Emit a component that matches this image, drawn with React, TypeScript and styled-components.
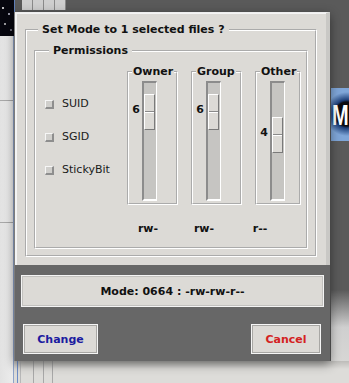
import React from 'react'
import styled, { createGlobalStyle } from 'styled-components'

const GlobalStyle = createGlobalStyle`
  html, body {
    margin: 0;
    padding: 0;
    background: #5a5a5a;
  }
  body {
    font-family: 'DejaVu Sans', 'Liberation Sans', sans-serif;
  }
`

const Desktop = styled.div`
  position: relative;
  width: 349px;
  height: 383px;
  overflow: hidden;
  background: #5a5a5a;
  padding: 12px 0 0 14px;
  box-sizing: border-box;
`

/* other windows lying on the desktop behind the dialog */
const StarField = styled.div`
  position: absolute;
  left: 0;
  top: 0;
  width: 14px;
  height: 36px;
  background:
    radial-gradient(circle at 3px 8px, #fff 0.6px, transparent 1px),
    radial-gradient(circle at 9px 14px, #ccd 0.6px, transparent 1px),
    radial-gradient(circle at 5px 24px, #fff 0.5px, transparent 1px),
    radial-gradient(circle at 11px 30px, #aab 0.5px, transparent 1px),
    #07070f;
  border-right: 1px solid #5f7fb8;
`

const LeftPane = styled.div`
  position: absolute;
  left: 0;
  top: 36px;
  width: 14px;
  height: 347px;
  background: linear-gradient(to right, #e2e2e2, #ececec);
  border-right: 1px solid #8fa3c8;
  box-sizing: border-box;

  &::before,
  &::after {
    content: '';
    position: absolute;
    left: 0;
    right: 0;
    height: 1px;
    background: #a8a8a8;
  }
  &::before {
    top: 64px;
  }
  &::after {
    top: 186px;
  }
`

const TitleStrip = styled.div`
  position: absolute;
  left: 22px;
  top: 0;
  width: 44px;
  height: 10px;
  background: repeating-linear-gradient(
    to right,
    #cfcfcf 0,
    #cfcfcf 10px,
    #8a8a8a 10px,
    #8a8a8a 11px
  );
`

const Logo = styled.div`
  position: absolute;
  left: 331px;
  top: 88px;
  width: 18px;
  height: 53px;
  background: radial-gradient(circle at 16px 26px, #0c0c10 12px, #1d3f78 14px, #7fa6d8 22px);
  display: flex;
  align-items: center;
  justify-content: flex-start;
  overflow: hidden;
`

const LogoLetter = styled.span`
  color: #fff;
  font: bold 20px 'Liberation Sans', sans-serif;
  line-height: 20px;
  margin-left: 1px;
  transform: scaleY(1.45);
`

const RightShade = styled.div`
  position: absolute;
  left: 331px;
  top: 290px;
  width: 18px;
  height: 93px;
  background: linear-gradient(to bottom, #5a5a5a, #cfcfcf 40%, #dcdbd8);
`

const BottomStrip = styled.div`
  position: absolute;
  left: 14px;
  top: 361px;
  width: 335px;
  height: 22px;
  background:
    linear-gradient(to right,
      transparent 3px, #6d8cc6 3px, #6d8cc6 4px, transparent 4px,
      transparent 6px, #b8b8b8 6px, #b8b8b8 7px, transparent 7px,
      transparent 19px, #a8a8a8 19px, #a8a8a8 20px, transparent 20px,
      transparent 29px, #a8a8a8 29px, #a8a8a8 30px, transparent 30px,
      transparent 38px, #a8a8a8 38px, #a8a8a8 39px, transparent 39px),
    linear-gradient(to bottom, #bdbcb9, #dddcd9 8px);
`

const Dialog = styled.div`
  position: relative;
  width: 316px;
  height: 349px;
  background: #676767;
  display: flex;
  flex-direction: column;
  box-shadow: 0 3px 10px rgba(0, 0, 0, 0.45);
  border-left: 1px solid #7c7c7c;
  box-sizing: border-box;
`

const TopPanel = styled.div`
  height: 253px;
  background: #dcdad6;
  padding: 10px 9px 0 10px;
  box-sizing: border-box;
  border-top: 1px solid #eeeeee;
  border-right: 4px solid #c9c8c5;
  box-shadow: inset 2px 1px 0 #f4f4f4;
`

const Frame = styled.fieldset<{ $w?: number; $h?: number }>`
  margin: 0;
  min-width: 0;
  border: 2px groove #ffffff;
  ${p => (p.$w ? `width: ${p.$w}px;` : '')}
  ${p => (p.$h ? `height: ${p.$h}px;` : '')}
  box-sizing: border-box;
`

const OuterFrame = styled(Frame)`
  padding: 8px 7px 7px 7px;
`

const PermFrame = styled(Frame)`
  padding: 8px 0 0 9px;
  display: flex;
`

const Legend = styled.legend<{ $tight?: boolean }>`
  font-weight: bold;
  font-size: 11px;
  line-height: 13px;
  color: #111;
  padding: 0 ${p => (p.$tight ? 1 : 4)}px;
  margin-left: ${p => (p.$tight ? 3 : 4)}px;
`

const CheckCol = styled.div`
  width: 82px;
  display: flex;
  flex-direction: column;
  gap: 19px;
  padding-top: 32px;
`

const CheckRow = styled.label`
  display: flex;
  align-items: center;
  gap: 8px;
  font-size: 11px;
  line-height: 14px;
  color: #1a1a1a;
`

const CheckBox = styled.span`
  width: 9px;
  height: 9px;
  box-sizing: border-box;
  background: #d0cfcc;
  border-top: 1px solid #f6f6f6;
  border-left: 1px solid #f6f6f6;
  border-right: 2px solid #8e8e8e;
  border-bottom: 2px solid #8e8e8e;
`

const SliderArea = styled.div`
  display: flex;
  flex-direction: column;
`

const GroupRow = styled.div`
  display: flex;
  align-items: flex-start;
`

const GroupFrame = styled(Frame)`
  padding: 3px 0 2px 0;
  display: flex;
  margin-right: ${p => (p.$w === 51 ? 13 : 0)}px;
`

const ValueCol = styled.div`
  position: relative;
  width: 13px;
  flex: none;
`

const ValueText = styled.span`
  position: absolute;
  right: 2px;
  font-weight: bold;
  font-size: 11px;
  line-height: 13px;
  color: #111;
`

const Trough = styled.div`
  position: relative;
  width: 15px;
  height: 120px;
  box-sizing: border-box;
  background: #c6c5c2;
  border-top: 2px solid #8c8c8c;
  border-left: 2px solid #8c8c8c;
  border-right: 1px solid #ffffff;
  border-bottom: 2px solid #ffffff;
  flex: none;
`

const Thumb = styled.div`
  position: absolute;
  left: 0;
  width: 11px;
  height: 36px;
  box-sizing: border-box;
  background: #dcdad6;
  border-top: 1px solid #ffffff;
  border-left: 1px solid #ffffff;
  border-right: 1px solid #7a7a7a;
  border-bottom: 1px solid #7a7a7a;

  &::after {
    content: '';
    position: absolute;
    left: 0;
    right: 0;
    top: 16px;
    height: 1px;
    background: #8a8a8a;
    box-shadow: 0 1px 0 #ffffff;
  }
`

const PermRow = styled.div`
  display: flex;
  margin-left: -7px;
  margin-top: 17px;
`

const PermText = styled.span`
  width: 56px;
  text-align: center;
  font-weight: bold;
  font-size: 11px;
  line-height: 14px;
  color: #111;
`

const ModeBox = styled.div`
  margin: 10px 6px 0 6px;
  height: 32px;
  box-sizing: border-box;
  background: #dcdad6;
  border: 1px solid #f4f4f4;
  box-shadow: inset 0 0 0 1px #c2c1be;
  display: flex;
  align-items: center;
  justify-content: center;
  font-weight: bold;
  font-size: 11px;
  color: #111;
`

const ButtonRow = styled.div`
  display: flex;
  justify-content: space-between;
  padding: 17px 9px 0 8px;
`

const DialogButton = styled.button<{ $tone: 'ok' | 'cancel'; $w: number }>`
  width: ${p => p.$w}px;
  height: 30px;
  margin: 0;
  padding: 0;
  background: #dcdad6;
  border: 1px solid #f6f6f6;
  box-shadow: inset 0 0 0 1px #a8a7a4;
  font-family: 'DejaVu Sans', sans-serif;
  font-weight: bold;
  font-size: 11px;
  color: ${p => (p.$tone === 'ok' ? '#1c1ca0' : '#d42222')};
  cursor: pointer;
`

type Group = { name: string; value: number; width: number }

const groups: Group[] = [
  { name: 'Owner', value: 6, width: 51 },
  { name: 'Group', value: 6, width: 51 },
  { name: 'Other', value: 4, width: 46 },
]

const perm = (v: number) =>
  (v & 4 ? 'r' : '-') + (v & 2 ? 'w' : '-') + (v & 1 ? 'x' : '-')

const Slider: React.FC<{ value: number }> = ({ value }) => {
  const travel = 116 - 36
  const top = Math.round(((7 - value) / 7) * travel)
  return (
    <>
      <ValueCol>
        <ValueText style={{ top: top + 11 }}>{value}</ValueText>
      </ValueCol>
      <Trough>
        <Thumb style={{ top }} />
      </Trough>
    </>
  )
}

export default function App() {
  const mode = '0' + groups.map(g => g.value).join('')
  const text = '-' + groups.map(g => perm(g.value)).join('')

  return (
    <>
      <GlobalStyle />
      <Desktop>
        <StarField />
        <LeftPane />
        <TitleStrip />
        <Logo>
          <LogoLetter>M</LogoLetter>
        </Logo>
        <RightShade />
        <BottomStrip />
        <Dialog>
          <TopPanel>
            <OuterFrame $h={234}>
              <Legend>Set Mode to 1 selected files ?</Legend>
              <PermFrame $h={205}>
                <Legend>Permissions</Legend>
                <CheckCol>
                  {['SUID', 'SGID', 'StickyBit'].map(n => (
                    <CheckRow key={n}>
                      <CheckBox />
                      {n}
                    </CheckRow>
                  ))}
                </CheckCol>
                <SliderArea>
                  <GroupRow>
                    {groups.map(g => (
                      <GroupFrame key={g.name} $w={g.width}>
                        <Legend $tight>{g.name}</Legend>
                        <Slider value={g.value} />
                      </GroupFrame>
                    ))}
                  </GroupRow>
                  <PermRow>
                    {groups.map(g => (
                      <PermText key={g.name}>{perm(g.value)}</PermText>
                    ))}
                  </PermRow>
                </SliderArea>
              </PermFrame>
            </OuterFrame>
          </TopPanel>
          <ModeBox>
            Mode: {mode} : {text}
          </ModeBox>
          <ButtonRow>
            <DialogButton $tone="ok" $w={75}>
              Change
            </DialogButton>
            <DialogButton $tone="cancel" $w={70}>
              Cancel
            </DialogButton>
          </ButtonRow>
        </Dialog>
      </Desktop>
    </>
  )
}
